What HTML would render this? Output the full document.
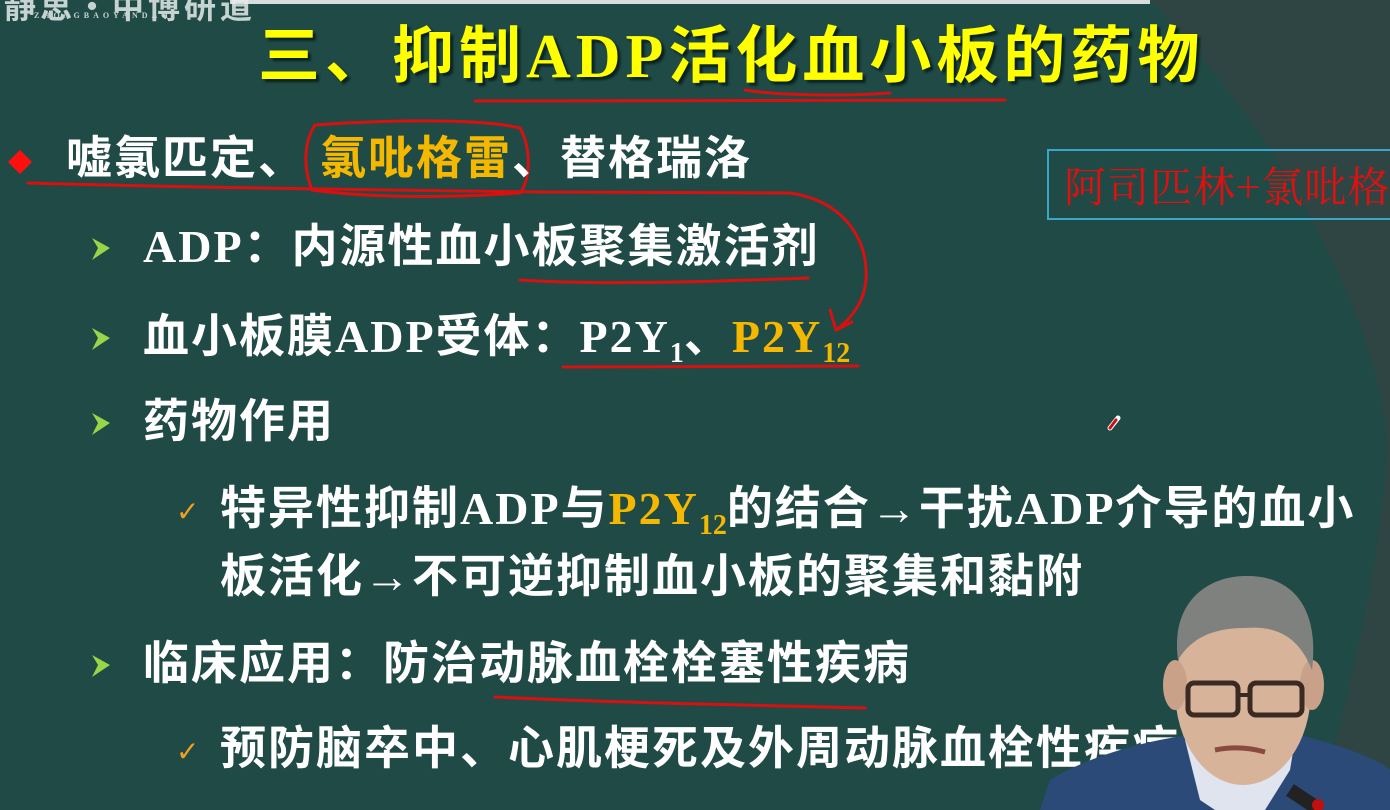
<!DOCTYPE html>
<html><head><meta charset="utf-8"><style>
body{margin:0;width:1390px;height:810px;overflow:hidden;background:#2f4543;position:relative;font-family:"Liberation Serif","Noto Sans CJK SC",serif;}
.t{position:absolute;white-space:nowrap;color:#fff;font-size:46px;letter-spacing:2px;font-weight:bold;line-height:50px;font-family:"Liberation Serif","Noto Sans CJK SC",sans-serif;}
.y{color:#f5b800}
sub{font-size:28px;vertical-align:-10px;line-height:0;letter-spacing:0}
.ck{position:absolute;color:#f0a020;font-size:28px;line-height:30px;font-family:"DejaVu Sans",sans-serif}
</style></head><body>
<svg width="1390" height="810" style="position:absolute;left:0;top:0">
<path d="M0,0 L1150,0 C1290,140 1400,360 1385,470 C1375,600 1345,700 1320,810 L0,810 Z" fill="#1f4a45"/>
<rect x="230" y="0" width="920" height="4" fill="#d8dcdc"/>
<rect x="1048" y="150" width="345" height="69" fill="none" stroke="#3aa6c8" stroke-width="2"/>
<g fill="none" stroke="#d81010" stroke-width="3" stroke-linecap="round">
<path d="M475,101 L1005,100"/>
<path d="M745,90 C780,96 850,96 890,93"/>
<path d="M28,183 C200,188 400,190 540,192 L790,193 C840,200 865,235 866,270 C868,300 850,320 836,330"/>
<path d="M836,330 L852,322 M836,330 L830,310"/>
<path d="M315,125 C380,120 480,118 520,128 C532,150 530,180 520,193 C450,198 370,198 312,190 C302,165 305,140 315,125 Z"/>
<path d="M520,280 C600,285 700,282 808,278"/>
<path d="M563,367 L858,366"/>
<path d="M495,697 C560,700 620,702 700,704 L865,708"/>
</g>
<path d="M1110,428 L1118,418" stroke="#fff" stroke-width="5" stroke-linecap="round"/>
<path d="M1110,428 L1116,420" stroke="#d01010" stroke-width="3" stroke-linecap="round"/>
<polygon points="20,150 32,162 20,174 8,162" fill="#ff1010"/>
<g fill="#9ad448">
<polygon points="92,238 110,248 92,260 98,248"/>
<polygon points="92,328 110,338 92,350 98,338"/>
<polygon points="92,413 110,423 92,435 98,423"/>
<polygon points="92,655 110,665 92,677 98,665"/>
</g>
</svg>
<div style="position:absolute;left:4px;top:-18px;color:#e4ecea;font-size:32px;font-weight:bold;font-family:'Noto Sans CJK SC',sans-serif;opacity:.85;letter-spacing:4px">静思·中博研道</div>
<div style="position:absolute;left:34px;top:11px;color:#c8d2d0;font-size:8px;letter-spacing:4px;font-family:'Liberation Serif',serif;font-weight:bold">ZHONGBAOYANDAO</div>
<div class="t" style="left:258px;top:22px;font-size:62px;letter-spacing:5px;line-height:70px;color:#ffff00;text-shadow:3px 3px 2px #0a2220">三、抑制ADP活化血小板的药物</div>
<div class="t" style="left:66px;top:134px">嘘氯匹定、<span class="y" style="margin-left:14px">氯吡格雷</span>、替格瑞洛</div>
<div class="t" style="left:1064px;top:158px;color:#e01010;font-size:42px;letter-spacing:1px;font-weight:normal;line-height:54px;font-family:'Noto Serif CJK SC','Liberation Serif',serif">阿司匹林+氯吡格雷</div>
<div class="t" style="left:143px;top:222px">ADP：内源性血小板聚集激活剂</div>
<div class="t" style="left:143px;top:312px">血小板膜ADP受体：P2Y<sub>1</sub>、<span class="y">P2Y<sub>12</sub></span></div>
<div class="t" style="left:143px;top:397px">药物作用</div>
<div class="ck" style="left:176px;top:497px">✓</div>
<div class="t" style="left:220px;top:484px">特异性抑制ADP与<span class="y">P2Y<sub>12</sub></span>的结合→干扰ADP介导的血小</div>
<div class="t" style="left:220px;top:552px">板活化→不可逆抑制血小板的聚集和黏附</div>
<div class="t" style="left:143px;top:639px">临床应用：防治动脉血栓栓塞性疾病</div>
<div class="ck" style="left:176px;top:737px">✓</div>
<div class="t" style="left:220px;top:724px">预防脑卒中、心肌梗死及外周动脉血栓性疾病发生</div>
<svg width="1390" height="810" style="position:absolute;left:0;top:0">
<path d="M1040,810 L1050,780 C1090,755 1150,740 1190,735 L1300,735 C1340,745 1380,760 1390,770 L1390,810 Z" fill="#2b4a78"/>
<path d="M1185,740 L1200,800 L1215,810 L1265,810 L1290,770 L1295,740 Z" fill="#dfe4ee"/>
<ellipse cx="1243" cy="690" rx="68" ry="95" fill="#d7b39a"/>
<ellipse cx="1175" cy="685" rx="12" ry="25" fill="#c9a088"/>
<ellipse cx="1312" cy="685" rx="12" ry="25" fill="#c9a088"/>
<path d="M1178,660 C1170,600 1210,575 1248,576 C1290,576 1320,605 1312,670 C1300,640 1280,625 1245,628 C1210,628 1190,640 1178,660 Z" fill="#7f817e"/>
<rect x="1188" y="683" width="50" height="32" rx="6" fill="none" stroke="#3a2a22" stroke-width="5"/>
<rect x="1250" y="683" width="52" height="32" rx="6" fill="none" stroke="#3a2a22" stroke-width="5"/>
<path d="M1238,695 L1250,695" stroke="#3a2a22" stroke-width="4"/>
<path d="M1215,750 Q1240,745 1265,752" stroke="#8a4a40" stroke-width="5" fill="none"/>
<path d="M1290,790 L1320,810" stroke="#222" stroke-width="14"/>
<circle cx="1318" cy="805" r="6" fill="#c01010"/>
</svg>
</body></html>
